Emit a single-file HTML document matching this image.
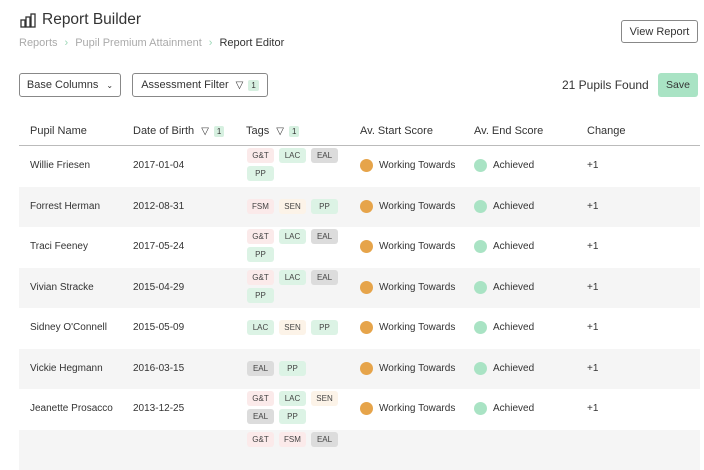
<!DOCTYPE html>
<html><head><style>
*{margin:0;padding:0;box-sizing:border-box}
body{width:704px;height:442px;overflow:hidden;background:#fff;font-family:"Liberation Sans",sans-serif;color:#333;position:relative}
.abs{position:absolute}
.btn{position:absolute;border:1px solid #888;border-radius:3px;font-size:11px;color:#333;display:flex;align-items:center;justify-content:center;background:#fff}
.badge{display:inline-block;background:#d6f0e0;color:#333;font-size:8px;padding:1px 3px;border-radius:2px;margin-left:5px;line-height:9px}
.th{position:absolute;top:125px;font-size:11px;color:#333}
.row{position:absolute;left:19px;width:681px;height:40.5px}
.g{background:#f5f5f5}
.c{position:absolute;font-size:10px;color:#333}
.tag{display:inline-block;width:27px;height:15px;line-height:15px;text-align:center;font-size:8px;border-radius:3px;margin-right:5px;margin-bottom:3px;color:#444}
.gt{background:#fbeaea}.lac{background:#dcf3e5}.eal{background:#dcdcdc}.pp{background:#dcf3e5}.fsm{background:#fbeaea}.sen{background:#fcf3e8}
.dot{position:absolute;width:13px;height:13px;border-radius:50%}
.o{background:#e6a44a}.gr{background:#a9e3c4}
.ch{color:#9dd8b8;margin:0 7px 0 7px}
</style></head><body>
<svg class="abs" style="left:20px;top:13px" width="16" height="15" viewBox="0 0 16 15" fill="none" stroke="#333" stroke-width="1.3"><rect x="1" y="7" width="4" height="7"/><rect x="6" y="4" width="4" height="10"/><rect x="11" y="1" width="4" height="13"/></svg>
<div class="abs" style="left:42px;top:11px;font-size:15.5px;color:#333">Report Builder</div>
<div class="abs" style="left:19px;top:37px;font-size:11px;color:#aaa">Reports<span class="ch">›</span>Pupil Premium Attainment<span class="ch">›</span><span style="color:#333">Report Editor</span></div>
<div class="btn" style="left:621px;top:20px;width:77px;height:23px">View Report</div>
<div class="btn" style="left:19px;top:73px;width:102px;height:24px">Base Columns <span style="margin-left:8px;font-size:8px">⌄</span></div>
<div class="btn" style="left:132px;top:73px;width:136px;height:24px">Assessment Filter <span style="margin-left:7px;font-size:10px">▽</span><span class="badge">1</span></div>
<div class="abs" style="left:562px;top:78px;font-size:12px">21 Pupils Found</div>
<div class="abs" style="left:658px;top:73px;width:40px;height:24px;background:#a9e3c4;border-radius:3px;font-size:10.5px;display:flex;align-items:center;justify-content:center">Save</div>
<div class="th" style="left:30px">Pupil Name</div>
<div class="th" style="left:133px">Date of Birth <span style="font-size:10px;margin-left:4px">▽</span><span class="badge">1</span></div>
<div class="th" style="left:246px">Tags <span style="font-size:10px;margin-left:4px">▽</span><span class="badge">1</span></div>
<div class="th" style="left:360px">Av. Start Score</div>
<div class="th" style="left:474px">Av. End Score</div>
<div class="th" style="left:587px">Change</div>
<div class="abs" style="left:19px;top:145px;width:681px;height:1px;background:#bbb"></div>

<div class="row" style="top:146px"><div class="c" style="left:11px;top:14px">Willie Friesen</div><div class="c" style="left:114px;top:14px">2017-01-04</div><div class="c" style="left:228px;top:2px;width:100px"><span class="tag gt">G&amp;T</span><span class="tag lac">LAC</span><span class="tag eal">EAL</span><span class="tag pp">PP</span></div><div class="dot o" style="left:341px;top:13px"></div><div class="c" style="left:360px;top:14px">Working Towards</div><div class="dot gr" style="left:455px;top:13px"></div><div class="c" style="left:474px;top:14px">Achieved</div><div class="c" style="left:568px;top:14px">+1</div></div>
<div class="row g" style="top:186.5px"><div class="c" style="left:11px;top:14px">Forrest Herman</div><div class="c" style="left:114px;top:14px">2012-08-31</div><div class="c" style="left:228px;top:12px;width:100px"><span class="tag fsm">FSM</span><span class="tag sen">SEN</span><span class="tag pp">PP</span></div><div class="dot o" style="left:341px;top:13px"></div><div class="c" style="left:360px;top:14px">Working Towards</div><div class="dot gr" style="left:455px;top:13px"></div><div class="c" style="left:474px;top:14px">Achieved</div><div class="c" style="left:568px;top:14px">+1</div></div>
<div class="row" style="top:227px"><div class="c" style="left:11px;top:14px">Traci Feeney</div><div class="c" style="left:114px;top:14px">2017-05-24</div><div class="c" style="left:228px;top:2px;width:100px"><span class="tag gt">G&amp;T</span><span class="tag lac">LAC</span><span class="tag eal">EAL</span><span class="tag pp">PP</span></div><div class="dot o" style="left:341px;top:13px"></div><div class="c" style="left:360px;top:14px">Working Towards</div><div class="dot gr" style="left:455px;top:13px"></div><div class="c" style="left:474px;top:14px">Achieved</div><div class="c" style="left:568px;top:14px">+1</div></div>
<div class="row g" style="top:267.5px"><div class="c" style="left:11px;top:14px">Vivian Stracke</div><div class="c" style="left:114px;top:14px">2015-04-29</div><div class="c" style="left:228px;top:2px;width:100px"><span class="tag gt">G&amp;T</span><span class="tag lac">LAC</span><span class="tag eal">EAL</span><span class="tag pp">PP</span></div><div class="dot o" style="left:341px;top:13px"></div><div class="c" style="left:360px;top:14px">Working Towards</div><div class="dot gr" style="left:455px;top:13px"></div><div class="c" style="left:474px;top:14px">Achieved</div><div class="c" style="left:568px;top:14px">+1</div></div>
<div class="row" style="top:308px"><div class="c" style="left:11px;top:14px">Sidney O'Connell</div><div class="c" style="left:114px;top:14px">2015-05-09</div><div class="c" style="left:228px;top:12px;width:100px"><span class="tag lac">LAC</span><span class="tag sen">SEN</span><span class="tag pp">PP</span></div><div class="dot o" style="left:341px;top:13px"></div><div class="c" style="left:360px;top:14px">Working Towards</div><div class="dot gr" style="left:455px;top:13px"></div><div class="c" style="left:474px;top:14px">Achieved</div><div class="c" style="left:568px;top:14px">+1</div></div>
<div class="row g" style="top:348.5px"><div class="c" style="left:11px;top:14px">Vickie Hegmann</div><div class="c" style="left:114px;top:14px">2016-03-15</div><div class="c" style="left:228px;top:12px;width:100px"><span class="tag eal">EAL</span><span class="tag pp">PP</span></div><div class="dot o" style="left:341px;top:13px"></div><div class="c" style="left:360px;top:14px">Working Towards</div><div class="dot gr" style="left:455px;top:13px"></div><div class="c" style="left:474px;top:14px">Achieved</div><div class="c" style="left:568px;top:14px">+1</div></div>
<div class="row" style="top:389px"><div class="c" style="left:11px;top:14px">Jeanette Prosacco</div><div class="c" style="left:114px;top:14px">2013-12-25</div><div class="c" style="left:228px;top:2px;width:100px"><span class="tag gt">G&amp;T</span><span class="tag lac">LAC</span><span class="tag sen">SEN</span><span class="tag eal">EAL</span><span class="tag pp">PP</span></div><div class="dot o" style="left:341px;top:13px"></div><div class="c" style="left:360px;top:14px">Working Towards</div><div class="dot gr" style="left:455px;top:13px"></div><div class="c" style="left:474px;top:14px">Achieved</div><div class="c" style="left:568px;top:14px">+1</div></div>
<div class="row g" style="top:429.5px"><div class="c" style="left:228px;top:2px;width:100px"><span class="tag gt">G&amp;T</span><span class="tag fsm">FSM</span><span class="tag eal">EAL</span></div></div>
</body></html>
